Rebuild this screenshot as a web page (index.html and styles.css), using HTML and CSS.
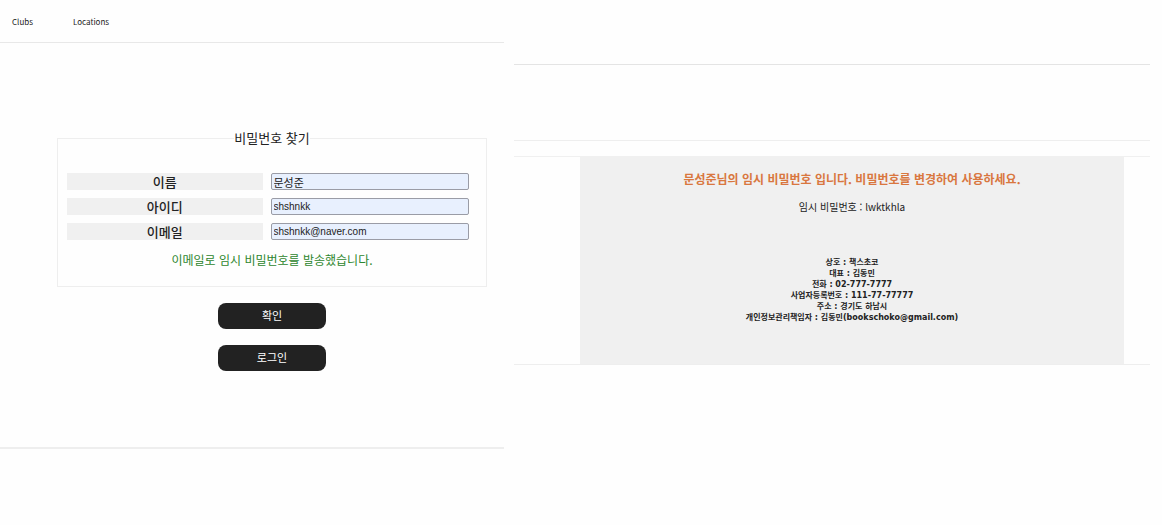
FILE: index.html
```html
<!DOCTYPE html>
<html lang="ko">
<head>
<meta charset="utf-8">
<meta name="viewport" content="width=device-width, initial-scale=1">
<title>비밀번호 찾기</title>
<link rel="stylesheet" href="styles.css">
</head>
<body>
<div class="layout">
  <div class="site">
    <nav class="nav">
      <a href="#clubs">Clubs</a>
      <a href="#locations">Locations</a>
    </nav>
    <main class="find">
      <form class="form">
        <fieldset class="box">
          <legend class="title">비밀번호 찾기</legend>
          <div class="row">
            <label for="name">이름</label>
            <input id="name" class="korean" type="text" value="문성준">
          </div>
          <div class="row">
            <label for="userid">아이디</label>
            <input id="userid" type="text" value="shshnkk">
          </div>
          <div class="row">
            <label for="email">이메일</label>
            <input id="email" type="email" value="shshnkk@naver.com">
          </div>
          <p class="notice">이메일로 임시 비밀번호를 발송했습니다.</p>
        </fieldset>
        <button class="button" type="submit">확인</button>
        <button class="button" type="button">로그인</button>
      </form>
    </main>
  </div>
  <article class="mail">
    <div class="mail-header"></div>
    <div class="mail-body">
      <div class="card">
        <h1 class="headline">문성준님의 임시 비밀번호 입니다. 비밀번호를 변경하여 사용하세요.</h1>
        <p class="password">임시 비밀번호 : lwktkhla</p>
        <address class="company">
          상호 : 책스초코<br>
          대표 : 김동민<br>
          전화 : 02-777-7777<br>
          사업자등록번호 : 111-77-77777<br>
          주소 : 경기도 하남시<br>
          개인정보관리책임자 : 김동민(bookschoko@gmail.com)
        </address>
      </div>
    </div>
  </article>
</div>
</body>
</html>
```
FILE: styles.css
```css
* {
  box-sizing: border-box;
}

body {
  margin: 0;
  background: #fefefe;
  color: #222;
  font-family: "Noto Sans CJK KR", sans-serif;
}

.layout {
  display: grid;
  grid-template-columns: 504fr 636fr;
  column-gap: 10px;
  align-items: start;
  padding-right: 12px;
}

.site {
  border-bottom: 2px solid #eee;
}

.nav {
  display: flex;
  gap: 40px;
  padding: 16px 12px 14px;
  border-bottom: 1px solid #e8e8e8;
  font-size: 8px;
  line-height: 12px;
}

.nav a {
  color: #222;
  text-decoration: none;
}

.find {
  padding: 86px 17px 76px 57px;
}

.form {
  display: flex;
  flex-direction: column;
  align-items: center;
  gap: 16px;
}

.box {
  display: flex;
  flex-direction: column;
  gap: 8px;
  width: 100%;
  min-width: 0;
  margin: 0;
  padding: 26px 9px 18px;
  border: 1px solid #eee;
}

.title {
  margin: 0 auto;
  padding: 0;
  font-size: 13px;
  line-height: 18px;
}

.row {
  display: grid;
  grid-template-columns: 196fr 199fr;
  gap: 8px;
  padding-right: 8px;
}

.row label {
  background: #f0f0f0;
  font-size: 13px;
  font-weight: 500;
  line-height: 17px;
  text-align: center;
}

.row input {
  width: 100%;
  min-width: 0;
  height: 17px;
  padding: 0 2px;
  border: 1px solid #9a9ca6;
  border-radius: 2px;
  background: #e8f0fe;
  color: #222;
  font-family: "Liberation Sans", "Noto Sans CJK KR", sans-serif;
  font-size: 10px;
}

.row .korean {
  font-size: 11px;
}

.notice {
  margin: 4px 0 0;
  color: #2d862d;
  font-size: 12px;
  line-height: 16px;
  text-align: center;
}

.button {
  width: 108px;
  height: 26px;
  padding: 0 0 2px;
  border: 0;
  border-radius: 8px;
  background: #222;
  color: #fff;
  font-family: inherit;
  font-size: 11px;
}

.mail-header {
  height: 65px;
  border-bottom: 1px solid #e4e4e4;
}

.mail-body {
  margin-top: 75px;
  padding-top: 15px;
  border-top: 1px solid #eee;
  border-bottom: 1px solid #eee;
}

.mail-body::before {
  content: "";
  display: block;
  border-top: 1px solid #f0f0f0;
}

.card {
  margin: 0 26px 0 66px;
  padding: 14px 8px 41px;
  background: #f0f0f0;
  text-align: center;
}

.headline {
  margin: 0;
  color: #d9773f;
  font-size: 12px;
  font-weight: 700;
  line-height: 16px;
}

.password {
  margin: 12px 0 42px;
  font-size: 10px;
  line-height: 16px;
}

.company {
  font-family: "DejaVu Sans", "Noto Sans CJK KR", sans-serif;
  font-size: 8px;
  font-style: normal;
  font-weight: 700;
  line-height: 11px;
}
```
